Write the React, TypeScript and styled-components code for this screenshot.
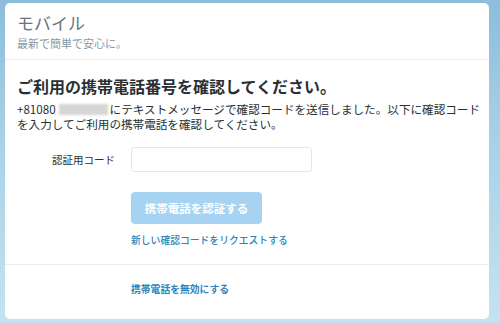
import React from 'react';
import styled, { createGlobalStyle } from 'styled-components';

const GlobalStyle = createGlobalStyle`
  html, body {
    margin: 0;
    padding: 0;
  }
  body {
    font-family: "Noto Sans CJK JP", "Noto Sans", sans-serif;
    background: linear-gradient(180deg, #8cbddb 0%, #a9d2e8 45%, #c4e3f0 100%);
    min-height: 323px;
  }
`;

const Page = styled.div`
  padding: 3px 11px 6px 5px;
  min-height: 323px;
  box-sizing: border-box;
`;

const Card = styled.div`
  background: #fff;
  border-radius: 5px;
  overflow: hidden;
`;

const Header = styled.div`
  padding: 8px 12px 7px;
  border-bottom: 1px solid #e6ecf0;
`;

const Title = styled.h1`
  margin: 0;
  font-size: 17px;
  line-height: 24px;
  font-weight: 400;
  color: #66757f;
`;

const Subtitle = styled.p`
  margin: 0;
  font-size: 11px;
  line-height: 17px;
  color: #8899a6;
`;

const Section = styled.div`
  padding: 15px 8px 17px 12px;
  border-bottom: 1px solid #e6ecf0;
`;

const Heading = styled.h2`
  margin: 0 0 5px;
  font-size: 16px;
  line-height: 22px;
  font-weight: 700;
  color: #292f33;
`;

const Body = styled.p`
  margin: 0;
  font-size: 11.6px;
  line-height: 15px;
  color: #292f33;
`;

const Phone = styled.span`
  margin-right: 3px;
`;

const Masked = styled.span`
  display: inline-block;
  width: 49px;
  height: 11px;
  margin-right: 2px;
  vertical-align: -1px;
  background: #d6d6d6;
  filter: blur(0.8px);
`;

const FormRow = styled.div`
  display: flex;
  align-items: center;
  gap: 16px;
  margin-top: 15px;
`;

const Label = styled.label`
  width: 98px;
  text-align: right;
  font-size: 10.5px;
  color: #292f33;
`;

const Input = styled.input`
  width: 181px;
  height: 25px;
  box-sizing: border-box;
  border: 1px solid #e1e8ed;
  border-radius: 3px;
  outline: none;
`;

const Actions = styled.div`
  display: flex;
  flex-direction: column;
  align-items: flex-start;
  gap: 9px;
  padding-left: 114px;
  margin-top: 20px;
`;

const Button = styled.button`
  width: 131px;
  height: 32px;
  border: none;
  border-radius: 4px;
  background: #a6d3f2;
  color: #fff;
  font-family: inherit;
  font-size: 11.5px;
  font-weight: 700;
  cursor: default;
`;

const Link = styled.a<{ $bold?: boolean }>`
  font-size: 9.8px;
  line-height: 14px;
  color: #2a86ba;
  font-weight: ${({ $bold }) => ($bold ? 600 : 500)};
  text-decoration: none;
`;

const Footer = styled.div`
  display: flex;
  padding: 17px 12px 23px 126px;
`;

export default function App() {
  return (
    <>
      <GlobalStyle />
      <Page>
        <Card>
          <Header>
            <Title>モバイル</Title>
            <Subtitle>最新で簡単で安心に。</Subtitle>
          </Header>
          <Section>
            <Heading>ご利用の携帯電話番号を確認してください。</Heading>
            <Body>
              <Phone>+81080</Phone>
              <Masked />
              にテキストメッセージで確認コードを送信しました。以下に確認コードを入力してご利用の携帯電話を確認してください。
            </Body>
            <FormRow>
              <Label htmlFor="code">認証用コード</Label>
              <Input id="code" type="text" />
            </FormRow>
            <Actions>
              <Button type="button">携帯電話を認証する</Button>
              <Link href="#">新しい確認コードをリクエストする</Link>
            </Actions>
          </Section>
          <Footer>
            <Link href="#" $bold>携帯電話を無効にする</Link>
          </Footer>
        </Card>
      </Page>
    </>
  );
}
